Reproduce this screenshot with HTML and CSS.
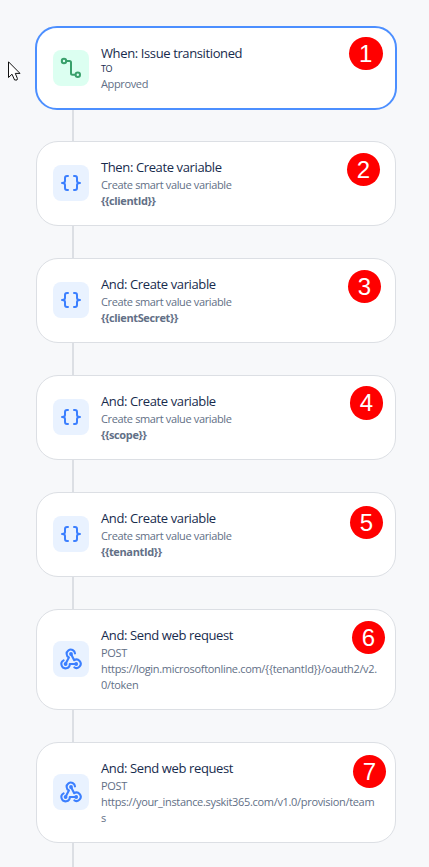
FILE: index.html
```
<!DOCTYPE html>
<html lang="en">
<head>
<meta charset="utf-8">
<title>Automation flow</title>
<link rel="stylesheet" href="styles.css">
</head>
<body>
<svg class="symbols" width="0" height="0">
  <symbol id="braces" viewBox="0 0 24 24"><path d="M9 5H8Q6 5 6 7V10Q6 12 3 12Q6 12 6 14V17Q6 19 8 19H9M15 5H16Q18 5 18 7V10Q18 12 21 12Q18 12 18 14V17Q18 19 16 19H15" fill="none" stroke="currentColor" stroke-width="2" stroke-linecap="round" stroke-linejoin="round"/></symbol>
  <symbol id="flow" viewBox="0 0 24 24"><g fill="none" stroke="currentColor" stroke-width="2"><circle cx="5" cy="5" r="2.2"/><circle cx="18.8" cy="18.8" r="2.2"/><path d="M7.2 5H10.5Q12 5 12 6.5V17.3Q12 18.8 13.5 18.8H16.6"/></g></symbol>
  <symbol id="webhook" viewBox="0 0 24 24"><g fill="none" stroke="currentColor" stroke-width="2.1" stroke-linecap="round" stroke-linejoin="round"><path d="M16 6.4A4.2 4.2 0 1 0 9.9 10.5L6.6 16.8"/><path d="M12 7L15.2 13.2A4.2 4.2 0 1 1 15.4 20.4"/><path d="M4.6 13.4A4.2 4.2 0 1 0 10.8 17H17.2"/></g><g fill="currentColor"><circle cx="12" cy="7" r="1.9"/><circle cx="6.6" cy="17" r="1.9"/><circle cx="17.2" cy="17" r="1.9"/></g></symbol>
</svg>
<main class="flow">
  <section class="card selected">
    <div class="icon green"><svg><use href="#flow"/></svg></div>
    <div class="text"><h2>When: Issue transitioned</h2><p class="to">TO</p><p>Approved</p></div>
    <span class="badge b1">1</span>
  </section>
  <section class="card">
    <div class="icon"><svg><use href="#braces"/></svg></div>
    <div class="text"><h2>Then: Create variable</h2><p>Create smart value variable</p><p><b>{{clientId}}</b></p></div>
    <span class="badge b2">2</span>
  </section>
  <section class="card">
    <div class="icon"><svg><use href="#braces"/></svg></div>
    <div class="text"><h2>And: Create variable</h2><p>Create smart value variable</p><p><b>{{clientSecret}}</b></p></div>
    <span class="badge b3">3</span>
  </section>
  <section class="card">
    <div class="icon"><svg><use href="#braces"/></svg></div>
    <div class="text"><h2>And: Create variable</h2><p>Create smart value variable</p><p><b>{{scope}}</b></p></div>
    <span class="badge b4">4</span>
  </section>
  <section class="card">
    <div class="icon"><svg><use href="#braces"/></svg></div>
    <div class="text"><h2>And: Create variable</h2><p>Create smart value variable</p><p><b>{{tenantId}}</b></p></div>
    <span class="badge b5">5</span>
  </section>
  <section class="card tall">
    <div class="icon"><svg><use href="#webhook"/></svg></div>
    <div class="text"><h2>And: Send web request</h2><p>POST</p><p class="url">https://login.microsoftonline.com/{{tenantId}}/oauth2/v2.<br>0/token</p></div>
    <span class="badge b6">6</span>
  </section>
  <section class="card tall">
    <div class="icon"><svg><use href="#webhook"/></svg></div>
    <div class="text"><h2>And: Send web request</h2><p>POST</p><p class="url">https://your_instance.syskit365.com/v1.0/provision/team<br>s</p></div>
    <span class="badge b7">7</span>
  </section>
</main>
<svg class="cursor" viewBox="0 0 13 20"><path d="M.5 .8V16.5L4 13.2L6.6 19H9L9.4 17.5L7.3 12.4H12Z" fill="#fff" stroke="#111" stroke-width="1"/></svg>
</body>
</html>
```
FILE: styles.css
```
* { box-sizing: border-box; }
body {
  margin: 0;
  height: 867px;
  overflow: hidden;
  background: #f7f8fa;
  font-family: "Open Sans", "Noto Sans", sans-serif;
}
.symbols { position: absolute; }
.flow {
  display: flex;
  flex-direction: column;
  gap: 32px;
  width: 360px;
  height: 867px;
  margin-left: 36px;
  padding-top: 26px;
  background: linear-gradient(#dcdfe4, #dcdfe4) 36px 60px / 2px 100% no-repeat;
}
.card {
  position: relative;
  display: flex;
  flex: none;
  align-items: flex-start;
  gap: 12px;
  height: 85px;
  padding: 23px 16px 0;
  border: 1px solid #dcdfe4;
  border-radius: 22px;
  background: #fff;
}
.text { margin-top: -8px; color: #626f86; white-space: nowrap; }
.tall { height: 101px; padding-top: 31px; }
.tall .text { margin-top: -16px; }
.selected {
  width: 362px;
  height: 84px;
  margin: 0 -1px -1px;
  padding-top: 22px;
  border: 2px solid #4c8fff;
}
.selected .text { margin-top: -7px; }
.icon {
  display: flex;
  flex: none;
  align-items: center;
  justify-content: center;
  width: 36px;
  height: 36px;
  border-radius: 8px;
  background: #e9f2ff;
  color: #3b7fff;
}
.icon svg { width: 24px; height: 24px; }
.green { background: #dcfff1; color: #39a06b; }
h2 {
  margin: 0;
  color: #172b4d;
  font-size: 13px;
  font-weight: 400;
  line-height: 20px;
  letter-spacing: -0.38px;
}
p { margin: 0; font-size: 11px; line-height: 16px; letter-spacing: -0.36px; }
.url { letter-spacing: -0.32px; }
.to { margin-top: -1px; color: #172b4d; font-size: 9px; line-height: 14px; }
.badge {
  position: absolute;
  width: 33.5px;
  height: 33.5px;
  border-radius: 50%;
  background: #f00;
  color: #fff;
  font: 24px/34px "Liberation Sans", sans-serif;
  text-align: center;
}
.b1 { left: 312px; top: 8.5px; }
.b2 { left: 309.7px; top: 10.5px; }
.b3 { left: 310.7px; top: 10.7px; }
.b4 { left: 312.7px; top: 10.2px; }
.b5 { left: 312.7px; top: 12.7px; }
.b6 { left: 314.7px; top: 10.7px; }
.b7 { left: 315.7px; top: 11.7px; }
.cursor { position: absolute; left: 8px; top: 61px; width: 13px; height: 20px; }
```
